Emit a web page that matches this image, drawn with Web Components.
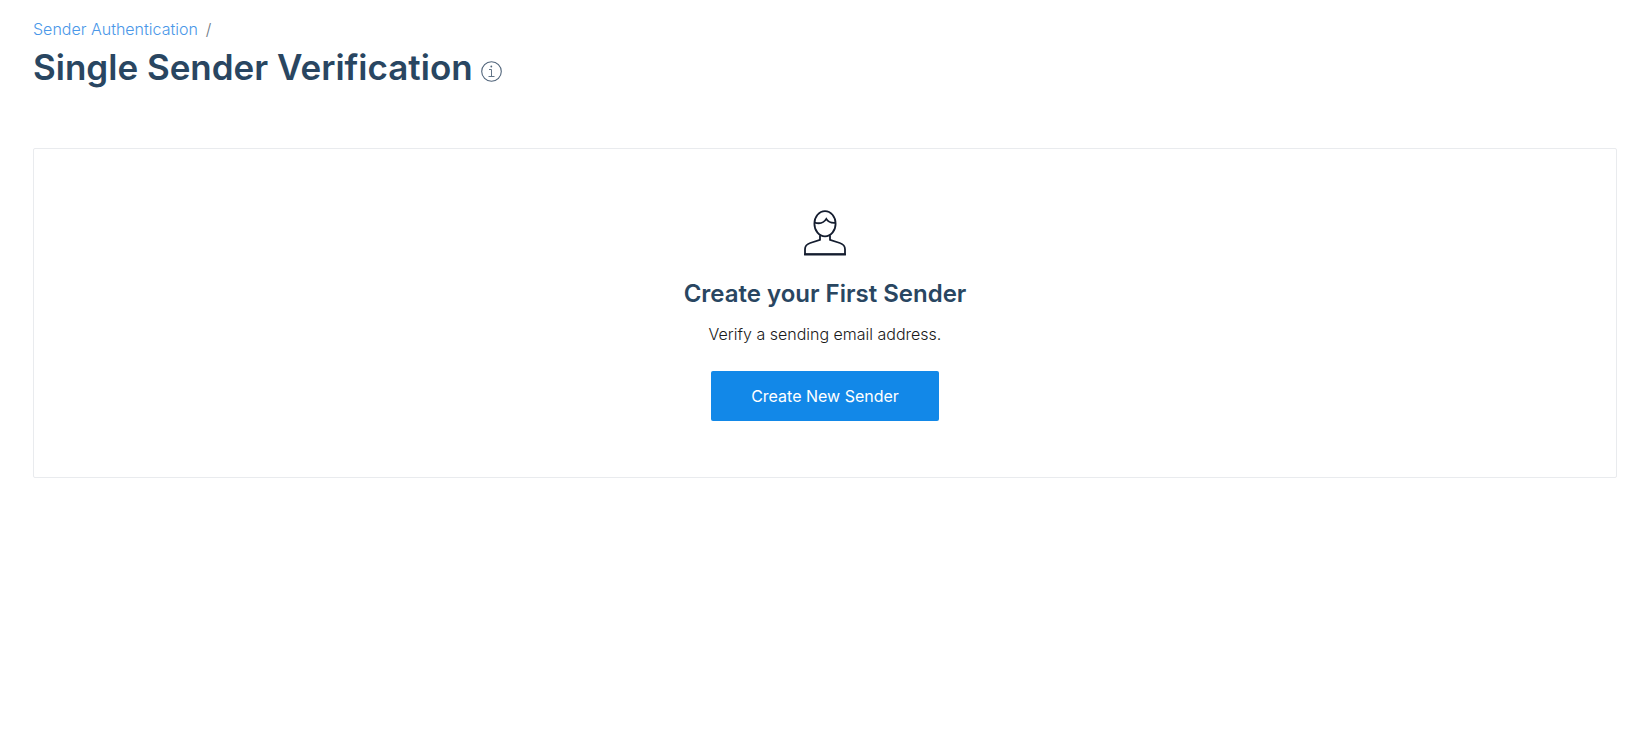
<!DOCTYPE html>
<html lang="en">
<head>
<meta charset="utf-8">
<title>Single Sender Verification</title>
<style>
  body { margin: 0; background: #fff; color: #1a1a1a; font-family: Inter, "Open Sans", sans-serif; font-size: 16px; line-height: 20px; }
</style>
</head>
<body>
<sender-page>
  <page-header slot="header">
    <a slot="crumb" href="#sender-authentication">Sender Authentication</a>
    Single Sender Verification
  </page-header>
  <empty-state>
    <sender-icon slot="icon"></sender-icon>
    <span slot="title">Create your First Sender</span>
    Verify a sending email address.
    <action-button slot="action">Create New Sender</action-button>
  </empty-state>
</sender-page>
<script>
const define = (name, html) => customElements.define(name, class extends HTMLElement {
  constructor() {
    super();
    this.attachShadow({ mode: "open" }).innerHTML = html;
  }
});

define("sender-page", `
  <style>
    :host { display: block; }
    main { display: flex; flex-direction: column; gap: 57px; padding: 19px 26px 32px 33px; }
  </style>
  <main><slot name="header"></slot><slot></slot></main>`);

define("page-header", `
  <style>
    :host { display: block; }
    nav { display: flex; gap: 8px; font-weight: 350; color: #6b7580; }
    ::slotted(a) { color: #4a97e8; text-decoration: none; }
    .row { display: flex; align-items: center; gap: 8px; margin-top: 4px; }
    h1 { margin: 0; font-size: 35px; line-height: 48px; font-weight: 600; color: #294661; }
    info-icon { margin-top: 8px; }
  </style>
  <nav aria-label="Breadcrumb"><slot name="crumb"></slot><span>/</span></nav>
  <div class="row"><h1><slot></slot></h1><info-icon></info-icon></div>`);

define("info-icon", `
  <style>
    :host { display: block; }
    button { display: block; padding: 0; border: 0; background: none; color: #51657b; }
    svg { display: block; }
  </style>
  <button type="button" aria-label="More information">
    <svg width="21" height="21" viewBox="0 0 21 21" fill="none" stroke="currentColor">
      <circle cx="10.5" cy="10.5" r="9.8" stroke-width="1.1"/>
      <path d="M8 8.500h2.500v6.500M7.500 15.500h6" stroke-width=".9"/>
      <circle cx="10.300" cy="5.500" r=".9" fill="currentColor" stroke="none"/>
    </svg>
  </button>`);

define("empty-state", `
  <style>
    :host { display: block; }
    section { display: flex; flex-direction: column; align-items: center; padding: 61px 24px 56px; border: 1px solid #e9ebee; border-radius: 2px; text-align: center; }
    h2 { margin: 22px 0 14px; font-size: 24px; line-height: 32px; font-weight: 600; color: #294661; }
    p { margin: 0 0 27px; font-weight: 350; }
  </style>
  <section>
    <slot name="icon"></slot>
    <h2><slot name="title"></slot></h2>
    <p><slot></slot></p>
    <slot name="action"></slot>
  </section>`);

define("sender-icon", `
  <style>
    :host { display: block; }
    svg { display: block; }
  </style>
  <svg width="42" height="46" viewBox="0 0 42 46" fill="none" stroke="#141d2f" stroke-width="1.8" aria-hidden="true">
    <ellipse cx="21" cy="13.7" rx="10.6" ry="12.6"/>
    <path d="M10.6 12.6c5 1.4 9.600-.2 11.700-3.700 1.700 2.800 5 4.300 9.200 3.900"/>
    <path d="M16 25.300v4.500L6.200 33C2.600 34.200 1 36.200 1 39.200v5h40v-5c0-3-1.600-5-5.200-6.200L26 29.800v-4.500"/>
    <path d="M.1 44.500h41.800"/>
  </svg>`);

define("action-button", `
  <style>
    :host { display: block; }
    button { display: block; min-width: 228px; height: 50px; padding: 0 32px; border: 0; border-radius: 2px; background: #1288e8; color: #fff; font: inherit; font-weight: 400; cursor: pointer; }
  </style>
  <button type="button"><slot></slot></button>`);
</script>
</body>
</html>
